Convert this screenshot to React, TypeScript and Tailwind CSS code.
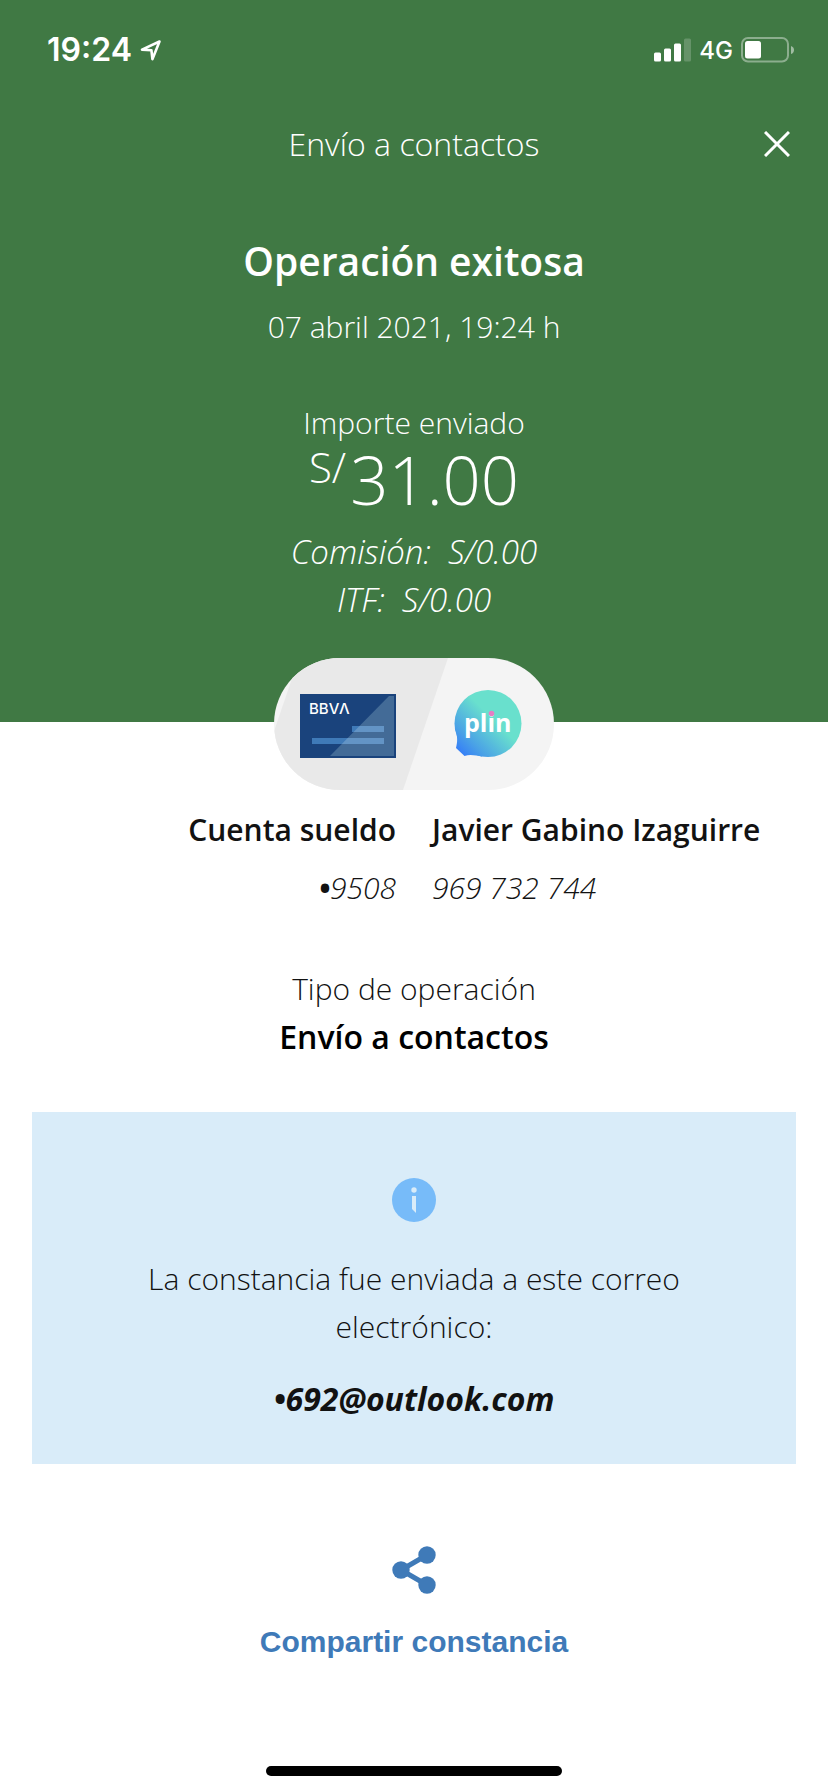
function StatusBar() {
  return (
    <div className="flex h-[100px] items-center justify-between pl-[47px] pr-[33px] font-['Inter',sans-serif]">
      <div className="flex items-center gap-2">
        <span className="text-[32px] font-semibold leading-10">19:24</span>
        <svg className="size-[22px]" viewBox="0 0 22 22" fill="none" stroke="currentColor" strokeWidth="2.6" strokeLinejoin="round" aria-hidden="true">
          <path d="M19.500 2.500 2 10.600 11.400 11.200 12.400 20.200Z" />
        </svg>
      </div>
      <div className="flex items-center gap-2">
        <svg className="h-6 w-[37px]" viewBox="0 0 37 24" fill="currentColor" aria-hidden="true">
          <rect x="0" y="14.5" width="7" height="9" rx="1.5" />
          <rect x="10" y="10.5" width="7" height="13" rx="1.5" />
          <rect x="20" y="5.5" width="7" height="18" rx="1.5" />
          <rect x="30" y="0.5" width="7" height="23" rx="1.5" opacity="0.2" />
        </svg>
        <span className="pt-[2px] text-2xl font-medium leading-8">4G</span>
        <svg className="h-[26px] w-[54px]" viewBox="0 0 54 26" aria-hidden="true">
          <rect x="1" y="1" width="46" height="23.500" rx="6" fill="none" stroke="#fff" strokeOpacity="0.4" strokeWidth="2" />
          <rect x="4" y="4" width="16" height="17.500" rx="2.500" fill="#fff" />
          <path d="M50 9c4 1.200 4 7 0 8Z" fill="#fff" fillOpacity="0.5" />
        </svg>
      </div>
    </div>
  );
}

function AccountsPill() {
  return (
    <svg className="relative mx-auto -mt-16 block h-[132px] w-[280px]" viewBox="0 0 280 132" role="img" aria-label="BBVA a plin">
      <defs>
        <clipPath id="pill">
          <rect width="280" height="132" rx="66" />
        </clipPath>
        <linearGradient id="bubble" gradientUnits="userSpaceOnUse" x1="184" y1="94" x2="218" y2="60">
          <stop offset="0" stopColor="#347cf8" />
          <stop offset="0.35" stopColor="#4aa2e6" />
          <stop offset="1" stopColor="#69e0cd" />
        </linearGradient>
      </defs>
      <g clipPath="url(#pill)">
        <rect width="280" height="132" fill="#f4f4f4" />
        <path d="M25 0H174L129 132H-20Z" fill="#e9e9e9" />
      </g>
      <rect x="26" y="36" width="96" height="64" fill="#1a437c" />
      <path d="M56 98H120V38H115Z" fill="#436b97" />
      <rect x="78" y="68" width="32" height="6" fill="#3f7ab8" />
      <rect x="38" y="80" width="72" height="6" fill="#3f7ab8" />
      <path d="M85.500 68H110V74H79.600ZM73.700 80H110V86H67.800Z" fill="#6394c5" />
      <g fill="#fff" fontFamily="Inter, sans-serif" fontSize="15" fontWeight="500">
        <text x="35" y="56">BBV</text>
        <text x="65" y="56">Λ</text>
      </g>
      <g fill="url(#bubble)">
        <circle cx="214" cy="65.500" r="33.500" />
        <path d="M180.800 70C184 79 183.500 84 182 90L190.500 98C196 96 202 97.500 208 98.500L214 66Z" />
      </g>
      <text x="190" y="74" fill="#fff" fontFamily="Open Sans, sans-serif" fontSize="25" fontWeight="700">plin</text>
      <circle cx="217.500" cy="55.500" r="2.800" fill="#e57fc4" />
    </svg>
  );
}

export default function App() {
  return (
    <main className="min-h-screen bg-white font-['Open_Sans',sans-serif] text-[30px] leading-[48px] text-[#121212]">
      <header className="bg-[#407944] pb-[98px] text-center text-white">
        <StatusBar />
        <div className="grid grid-cols-[1fr_auto_1fr] items-center px-[38px] pt-5">
          <h1 className="col-start-2 text-[32px] font-light">Envío a contactos</h1>
          <button type="button" aria-label="Cerrar" className="justify-self-end">
            <svg className="block size-[26px]" viewBox="0 0 26 26" fill="none" stroke="currentColor" strokeWidth="3" aria-hidden="true">
              <path d="M1 1 25 25M25 1 1 25" />
            </svg>
          </button>
        </div>
        <h2 className="mt-[65px] text-[39px] font-semibold leading-[56px]">Operación exitosa</h2>
        <p className="mt-[14px] font-light">07 abril 2021, 19:24 h</p>
        <p className="mt-12 font-light">Importe enviado</p>
        <p className="flex items-start justify-center gap-1 text-[67px] font-light leading-[64px]">
          <span className="text-[42px] leading-[40px]">S/</span>
          <span>31.00</span>
        </p>
        <p className="mt-[17px] text-[33px] font-light italic">Comisión:&nbsp; S/0.00</p>
        <p className="text-[33px] font-light italic">ITF:&nbsp; S/0.00</p>
      </header>

      <AccountsPill />

      <section className="mt-4 grid grid-cols-2 gap-x-9 gap-y-[10px]">
        <p className="text-right font-semibold">Cuenta sueldo</p>
        <p className="font-semibold">Javier Gabino Izaguirre</p>
        <p className="text-right font-light italic"><span className="font-bold">•</span>9508</p>
        <p className="font-light italic">969 732 744</p>
      </section>

      <section className="mt-[53px] text-center">
        <p className="font-light">Tipo de operación</p>
        <p className="text-[32px] font-semibold text-black">Envío a contactos</p>
      </section>

      <section className="mx-8 mt-[51px] bg-[#d9ecf9] px-20 pb-[41px] pt-[66px] text-center">
        <svg className="mx-auto block size-11" viewBox="0 0 44 44" aria-hidden="true">
          <circle cx="22" cy="22" r="22" fill="#77bbf9" />
          <circle cx="22" cy="12" r="2.700" fill="#d9ecf9" />
          <path d="M20 18H24V35L20 31Z" fill="#d9ecf9" />
        </svg>
        <p className="mt-[33px] font-light">La constancia fue enviada a este correo electrónico:</p>
        <p className="mt-6 text-[32px] font-bold italic">•692@outlook.com</p>
      </section>

      <button type="button" className="mx-auto mt-[82px] flex flex-col items-center gap-6 font-['Liberation_Sans',sans-serif] font-bold text-[#3f7ab8]">
        <svg className="h-12 w-11" viewBox="0 0 44 48" fill="currentColor" aria-hidden="true">
          <path d="M35 9 9 24 35 39" fill="none" stroke="currentColor" strokeWidth="5" />
          <circle cx="35" cy="9" r="8.700" />
          <circle cx="9" cy="24" r="8.700" />
          <circle cx="35" cy="39" r="8.700" />
        </svg>
        Compartir constancia
      </button>

      <div className="mx-auto mt-[100px] h-[10px] w-[296px] rounded-full bg-black" />
    </main>
  );
}
